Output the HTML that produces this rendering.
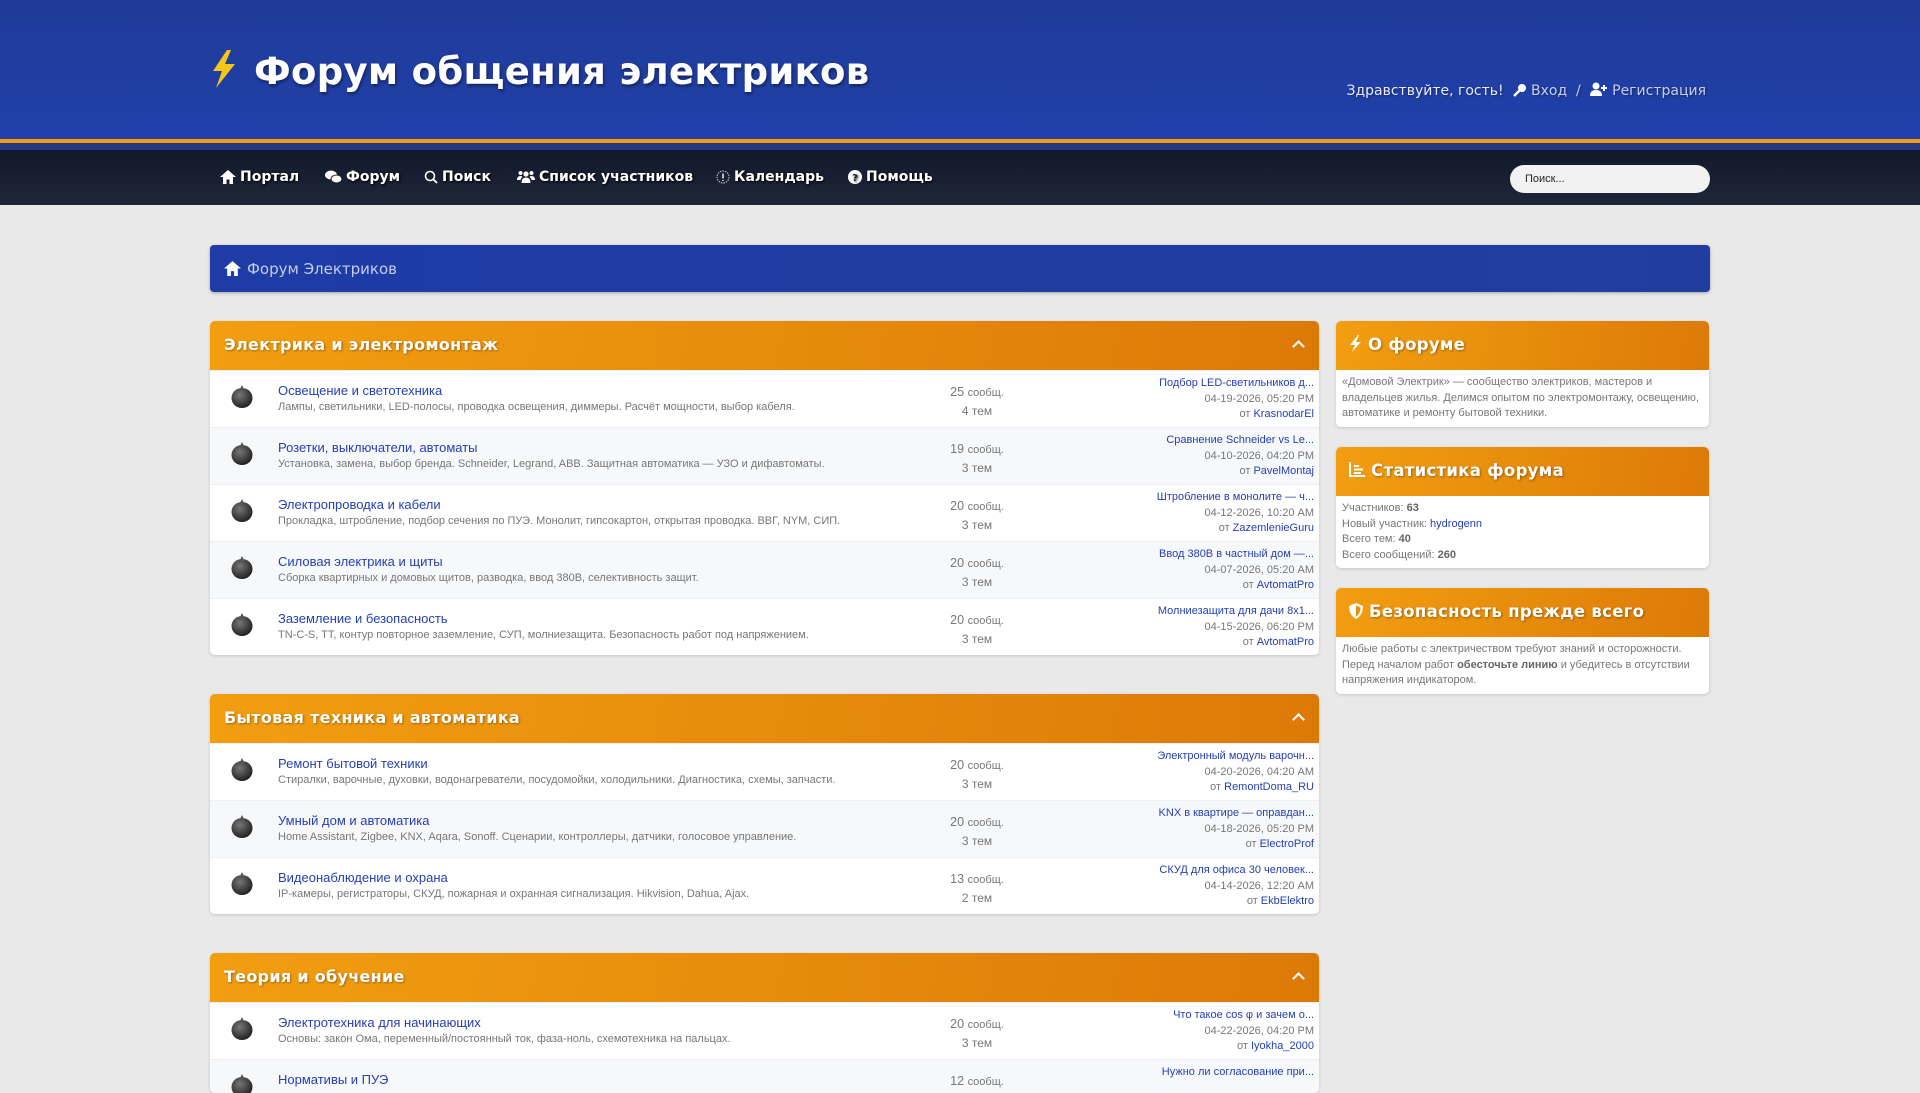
<!DOCTYPE html>
<html><head><meta charset="utf-8"><style>
*{box-sizing:border-box;margin:0;padding:0}
body{width:1920px;height:1080px;overflow:hidden;background:#e9e9e9;font-family:"Liberation Sans",sans-serif;position:relative}
.hdr{position:absolute;left:0;top:0;width:1920px;height:140px;background:linear-gradient(180deg,#1f3a98,#2141ab)}
.oline{position:absolute;top:139px;left:0;width:1920px;height:4px;background:#f39c12}
.strip{position:absolute;top:143px;left:0;width:1920px;height:7px;background:#22397f}
.title{position:absolute;left:208px;top:49px;font:bold 37px "DejaVu Sans",sans-serif;color:#fff;text-shadow:1px 2px 3px rgba(0,0,0,.45);letter-spacing:.3px}
.greet{position:absolute;right:214px;top:82px;font:14px "DejaVu Sans",sans-serif;color:#e6ebff;text-shadow:1px 1px 2px rgba(0,0,0,.4)}
.greet span{color:#c6cff0}
.nav{position:absolute;top:150px;left:0;width:1920px;height:55px;background:linear-gradient(180deg,#121829,#1e2739)}
.nav .it{position:absolute;top:19px;font:bold 14px "DejaVu Sans",sans-serif;color:#fff;text-shadow:1px 1px 2px #000;display:flex;align-items:center;gap:4px}
.search{position:absolute;left:1510px;top:165px;width:200px;height:28px;border-radius:14px;background:#f2f2f2;font:11px "Liberation Sans",sans-serif;color:#222;padding:8px 15px}
.bc{position:absolute;left:210px;top:245px;width:1500px;height:47px;border-radius:4px;background:linear-gradient(90deg,#1e3ba6,#213e9f);color:#c5cdf0;font:15px "DejaVu Sans",sans-serif;padding:14px 14px;display:flex;align-items:center;gap:6px;box-shadow:0 1px 3px rgba(0,0,0,.3)}
.cat{position:absolute;left:210px;width:1109px;border-radius:5px;overflow:hidden;box-shadow:0 1px 3px rgba(0,0,0,.15);background:#fff}
.ch{height:49px;background:linear-gradient(100deg,#f29e10,#dc7a08);color:#fff;font:bold 16px "DejaVu Sans",sans-serif;padding:14px 14px;text-shadow:1px 1px 2px rgba(0,0,0,.35);position:relative;letter-spacing:.3px}
.ch .car{position:absolute;right:16px;width:9px;height:9px;border-left:2px solid #fff;border-top:2px solid #fff;transform:rotate(45deg);top:21px}
.row{height:57px;position:relative;border-top:1px solid #eceff3}
.row:nth-child(odd){background:#f7f8fa}
.row .ic{position:absolute;left:21px;top:13px;width:22px;height:24px}
.rt{position:absolute;left:68px;top:12px;font-size:13px;color:#2440b5}
.rd{position:absolute;left:68px;top:30px;font-size:11px;color:#777}
.st{position:absolute;left:717px;width:100px;text-align:center;top:12px;font-size:12.5px;color:#777;line-height:18px}
.st small{font-size:11px}
.st .t{font-size:12px}
.lp{position:absolute;right:5px;top:5px;text-align:right;font-size:11px;line-height:15.5px;color:#777;width:260px}
.lp a,.lp b{color:#2440b5;text-decoration:none;font-weight:normal}
.sb{position:absolute;left:1336px;width:373px;border-radius:5px;overflow:hidden;background:#fff;box-shadow:0 1px 3px rgba(0,0,0,.15)}
.sb .ch{font-size:16.5px;padding:14px 13px}
.sbb{padding:5px 6px;font-size:11px;color:#777;line-height:15.5px}
.sbb b{color:#666}
.sbb a{color:#2440b5}
</style></head><body>
<div class="hdr"></div><div class="oline"></div><div class="strip"></div>
<div class="title"><svg width="30" height="40" viewBox="0 0 30 40" style="vertical-align:-5px;margin-right:16px"><path d="M19 1 L5 22 L14 22 L8 39 L27 15 L17 15 L23 1Z" fill="#f5c518"/></svg>Форум общения электриков</div>
<div class="greet">Здравствуйте, гость! &nbsp;<span><svg width="14" height="14" viewBox="0 0 14 14" style="vertical-align:-2px"><circle cx="9" cy="5" r="4" fill="#fff"/><path d="M7 7L1 13" stroke="#fff" stroke-width="2.5"/></svg> Вход &nbsp;/ &nbsp;<svg width="18" height="14" viewBox="0 0 18 14" style="vertical-align:-1px"><circle cx="6" cy="4" r="3.5" fill="#fff"/><path d="M0 14 Q0 8 6 8 Q12 8 12 14Z" fill="#fff"/><path d="M14 3v6M11 6h6" stroke="#fff" stroke-width="2"/></svg> Регистрация</span></div>
<div class="nav">
<div class="it" style="left:220px"><svg width="16" height="14" viewBox="0 0 16 14"><path d="M8 0 L16 7 H13 V14 H9.5 V9.5 H6.5 V14 H3 V7 H0Z" fill="#fff"/></svg>Портал</div>
<div class="it" style="left:325px"><svg width="17" height="14" viewBox="0 0 17 14"><ellipse cx="6" cy="5" rx="6" ry="4.5" fill="#fff"/><ellipse cx="11.5" cy="9" rx="5.5" ry="4" fill="#fff" stroke="#1a2133"/></svg>Форум</div>
<div class="it" style="left:424px"><svg width="14" height="14" viewBox="0 0 14 14"><circle cx="6" cy="6" r="4.5" stroke="#fff" stroke-width="1.6" fill="none"/><path d="M9 9l4 4" stroke="#fff" stroke-width="1.8"/></svg>Поиск</div>
<div class="it" style="left:517px"><svg width="18" height="14" viewBox="0 0 18 14"><circle cx="9" cy="4" r="2.6" fill="#fff"/><circle cx="3.5" cy="3" r="2" fill="#fff"/><circle cx="14.5" cy="3" r="2" fill="#fff"/><path d="M4.5 13Q4.5 7.5 9 7.5Q13.5 7.5 13.5 13Z M0 10Q0 6 3.5 6Q5 6 5.5 7Q3.8 8 3.5 10Z M18 10Q18 6 14.5 6Q13 6 12.5 7Q14.2 8 14.5 10Z" fill="#fff"/></svg>Список участников</div>
<div class="it" style="left:716px"><svg width="14" height="14" viewBox="0 0 14 14"><circle cx="7" cy="7" r="6" fill="none" stroke="#ccc" stroke-width="1" stroke-dasharray="1.5 1"/><path d="M7 3.5v5M7 10v1" stroke="#fff" stroke-width="1.4"/></svg>Календарь</div>
<div class="it" style="left:848px"><svg width="14" height="14" viewBox="0 0 14 14"><circle cx="7" cy="7" r="7" fill="#fff"/><text x="7" y="11" font-size="10" font-weight="bold" text-anchor="middle" fill="#1a2133" font-family="DejaVu Sans">?</text></svg>Помощь</div>
</div>
<div class="search">Поиск...</div>
<div class="bc"><svg width="17" height="15" viewBox="0 0 16 14"><path d="M8 0 L16 7 H13 V14 H9.5 V9.5 H6.5 V14 H3 V7 H0Z" fill="#fff"/></svg>Форум Электриков</div>

<svg width="0" height="0" style="position:absolute"><defs><radialGradient id="g" cx=".4" cy=".35" r=".7"><stop offset="0" stop-color="#777"/><stop offset="1" stop-color="#1c1c1c"/></radialGradient></defs></svg>

<div class="cat" style="top:321px">
<div class="ch">Электрика и электромонтаж<span class="car"></span></div>
<div class="row"><svg class="ic" viewBox="0 0 22 24"><ellipse cx="11" cy="14" rx="10.5" ry="10" fill="url(#g)"/><path d="M11 1l3 6h-6z" fill="#555"/></svg><div class="rt">Освещение и светотехника</div><div class="rd">Лампы, светильники, LED-полосы, проводка освещения, диммеры. Расчёт мощности, выбор кабеля.</div><div class="st">25 <small>сообщ.</small><br><span class="t">4 тем</span></div><div class="lp"><a>Подбор LED-светильников д...</a><br>04-19-2026, 05:20 PM<br>от <b>KrasnodarEl</b></div></div>
<div class="row"><svg class="ic" viewBox="0 0 22 24"><ellipse cx="11" cy="14" rx="10.5" ry="10" fill="url(#g)"/><path d="M11 1l3 6h-6z" fill="#555"/></svg><div class="rt">Розетки, выключатели, автоматы</div><div class="rd">Установка, замена, выбор бренда. Schneider, Legrand, ABB. Защитная автоматика — УЗО и дифавтоматы.</div><div class="st">19 <small>сообщ.</small><br><span class="t">3 тем</span></div><div class="lp"><a>Сравнение Schneider vs Le...</a><br>04-10-2026, 04:20 PM<br>от <b>PavelMontaj</b></div></div>
<div class="row"><svg class="ic" viewBox="0 0 22 24"><ellipse cx="11" cy="14" rx="10.5" ry="10" fill="url(#g)"/><path d="M11 1l3 6h-6z" fill="#555"/></svg><div class="rt">Электропроводка и кабели</div><div class="rd">Прокладка, штробление, подбор сечения по ПУЭ. Монолит, гипсокартон, открытая проводка. ВВГ, NYM, СИП.</div><div class="st">20 <small>сообщ.</small><br><span class="t">3 тем</span></div><div class="lp"><a>Штробление в монолите — ч...</a><br>04-12-2026, 10:20 AM<br>от <b>ZazemlenieGuru</b></div></div>
<div class="row"><svg class="ic" viewBox="0 0 22 24"><ellipse cx="11" cy="14" rx="10.5" ry="10" fill="url(#g)"/><path d="M11 1l3 6h-6z" fill="#555"/></svg><div class="rt">Силовая электрика и щиты</div><div class="rd">Сборка квартирных и домовых щитов, разводка, ввод 380В, селективность защит.</div><div class="st">20 <small>сообщ.</small><br><span class="t">3 тем</span></div><div class="lp"><a>Ввод 380В в частный дом —...</a><br>04-07-2026, 05:20 AM<br>от <b>AvtomatPro</b></div></div>
<div class="row"><svg class="ic" viewBox="0 0 22 24"><ellipse cx="11" cy="14" rx="10.5" ry="10" fill="url(#g)"/><path d="M11 1l3 6h-6z" fill="#555"/></svg><div class="rt">Заземление и безопасность</div><div class="rd">TN-C-S, TT, контур повторное заземление, СУП, молниезащита. Безопасность работ под напряжением.</div><div class="st">20 <small>сообщ.</small><br><span class="t">3 тем</span></div><div class="lp"><a>Молниезащита для дачи 8х1...</a><br>04-15-2026, 06:20 PM<br>от <b>AvtomatPro</b></div></div>
</div>

<div class="cat" style="top:694px">
<div class="ch">Бытовая техника и автоматика<span class="car"></span></div>
<div class="row"><svg class="ic" viewBox="0 0 22 24"><ellipse cx="11" cy="14" rx="10.5" ry="10" fill="url(#g)"/><path d="M11 1l3 6h-6z" fill="#555"/></svg><div class="rt">Ремонт бытовой техники</div><div class="rd">Стиралки, варочные, духовки, водонагреватели, посудомойки, холодильники. Диагностика, схемы, запчасти.</div><div class="st">20 <small>сообщ.</small><br><span class="t">3 тем</span></div><div class="lp"><a>Электронный модуль варочн...</a><br>04-20-2026, 04:20 AM<br>от <b>RemontDoma_RU</b></div></div>
<div class="row"><svg class="ic" viewBox="0 0 22 24"><ellipse cx="11" cy="14" rx="10.5" ry="10" fill="url(#g)"/><path d="M11 1l3 6h-6z" fill="#555"/></svg><div class="rt">Умный дом и автоматика</div><div class="rd">Home Assistant, Zigbee, KNX, Aqara, Sonoff. Сценарии, контроллеры, датчики, голосовое управление.</div><div class="st">20 <small>сообщ.</small><br><span class="t">3 тем</span></div><div class="lp"><a>KNX в квартире — оправдан...</a><br>04-18-2026, 05:20 PM<br>от <b>ElectroProf</b></div></div>
<div class="row"><svg class="ic" viewBox="0 0 22 24"><ellipse cx="11" cy="14" rx="10.5" ry="10" fill="url(#g)"/><path d="M11 1l3 6h-6z" fill="#555"/></svg><div class="rt">Видеонаблюдение и охрана</div><div class="rd">IP-камеры, регистраторы, СКУД, пожарная и охранная сигнализация. Hikvision, Dahua, Ajax.</div><div class="st">13 <small>сообщ.</small><br><span class="t">2 тем</span></div><div class="lp"><a>СКУД для офиса 30 человек...</a><br>04-14-2026, 12:20 AM<br>от <b>EkbElektro</b></div></div>
</div>

<div class="cat" style="top:953px;height:140px">
<div class="ch">Теория и обучение<span class="car"></span></div>
<div class="row"><svg class="ic" viewBox="0 0 22 24"><ellipse cx="11" cy="14" rx="10.5" ry="10" fill="url(#g)"/><path d="M11 1l3 6h-6z" fill="#555"/></svg><div class="rt">Электротехника для начинающих</div><div class="rd">Основы: закон Ома, переменный/постоянный ток, фаза-ноль, схемотехника на пальцах.</div><div class="st">20 <small>сообщ.</small><br><span class="t">3 тем</span></div><div class="lp"><a>Что такое cos φ и зачем о...</a><br>04-22-2026, 04:20 PM<br>от <b>Iyokha_2000</b></div></div>
<div class="row"><svg class="ic" viewBox="0 0 22 24"><ellipse cx="11" cy="14" rx="10.5" ry="10" fill="url(#g)"/><path d="M11 1l3 6h-6z" fill="#555"/></svg><div class="rt">Нормативы и ПУЭ</div><div class="rd"></div><div class="st">12 <small>сообщ.</small><br><span class="t">3 тем</span></div><div class="lp"><a>Нужно ли согласование при...</a><br></div></div>
</div>

<div class="sb" style="top:321px"><div class="ch"><svg width="13" height="17" viewBox="0 0 13 17" style="vertical-align:-2px"><path d="M9 0L1 10h5l-3 7 9-10H7l3-7z" fill="#fff"/></svg> О форуме</div><div class="sbb">«Домовой Электрик» — сообщество электриков, мастеров и владельцев жилья. Делимся опытом по электромонтажу, освещению, автоматике и ремонту бытовой техники.</div></div>
<div class="sb" style="top:447px"><div class="ch"><svg width="16" height="15" viewBox="0 0 16 15" style="vertical-align:-1px"><path d="M1 0v14h15" stroke="#fff" stroke-width="2" fill="none"/><path d="M5 4h5M5 7.5h9M5 11h7" stroke="#fff" stroke-width="2"/></svg> Статистика форума</div><div class="sbb">Участников: <b>63</b><br>Новый участник: <a>hydrogenn</a><br>Всего тем: <b>40</b><br>Всего сообщений: <b>260</b></div></div>
<div class="sb" style="top:588px"><div class="ch"><svg width="14" height="16" viewBox="0 0 14 16" style="vertical-align:-2px"><path d="M7 0L14 3Q14 12 7 16Q0 12 0 3Z" fill="#fff"/><path d="M7 2.5L11.5 4.5Q11.5 11 7 13.5Z" fill="#e88f0c"/></svg> Безопасность прежде всего</div><div class="sbb">Любые работы с электричеством требуют знаний и осторожности. Перед началом работ <b>обесточьте линию</b> и убедитесь в отсутствии напряжения индикатором.</div></div>
</body></html>
